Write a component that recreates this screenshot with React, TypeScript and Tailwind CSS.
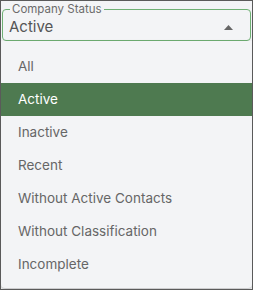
import React from "react"

const OPTIONS = [
  "All",
  "Active",
  "Inactive",
  "Recent",
  "Without Active Contacts",
  "Without Classification",
  "Incomplete",
]

export default function App() {
  const selected = "Active"

  return (
    <div
      className="w-[253px] h-[290px] overflow-hidden border border-[#5a5a5a] bg-[#f3f4f6] flex flex-col"
      style={{ fontFamily: "Inter, 'Liberation Sans', sans-serif" }}
    >
      {/* Outlined select */}
      <div className="px-[1px] pt-[2px]">
        <fieldset className="h-[38px] rounded-[4px] border border-[#6fb074] px-[6px] bg-[#f3f4f6]">
          <legend className="ml-[1px] px-[2px] text-[11.5px] leading-[12px] text-[#6b6b6b]">Company Status</legend>
          <div className="flex items-center justify-between h-[23px]">
            <span className="text-[15px] leading-[18px] text-[#555]">{selected}</span>
            <svg width="9" height="5" viewBox="0 0 9 5" className="mr-[11px] mt-[1px]">
              <path d="M0 5 L4.5 0 L9 5 Z" fill="#666" />
            </svg>
          </div>
        </fieldset>
      </div>

      {/* Menu */}
      <div className="flex-1 bg-[#f3f4f6] rounded-b-[4px] shadow-[0_1px_3px_rgba(0,0,0,0.25)] pt-[9px] mb-[1px]">
        {OPTIONS.map((opt) => {
          const active = opt === selected
          return (
            <div
              key={opt}
              className={`h-[33px] flex items-center px-[17px] text-[13.5px] ${
                active ? "bg-[#4e7a50] text-white" : "text-[#666]"
              }`}
            >
              {opt}
            </div>
          )
        })}
      </div>
    </div>
  )
}
